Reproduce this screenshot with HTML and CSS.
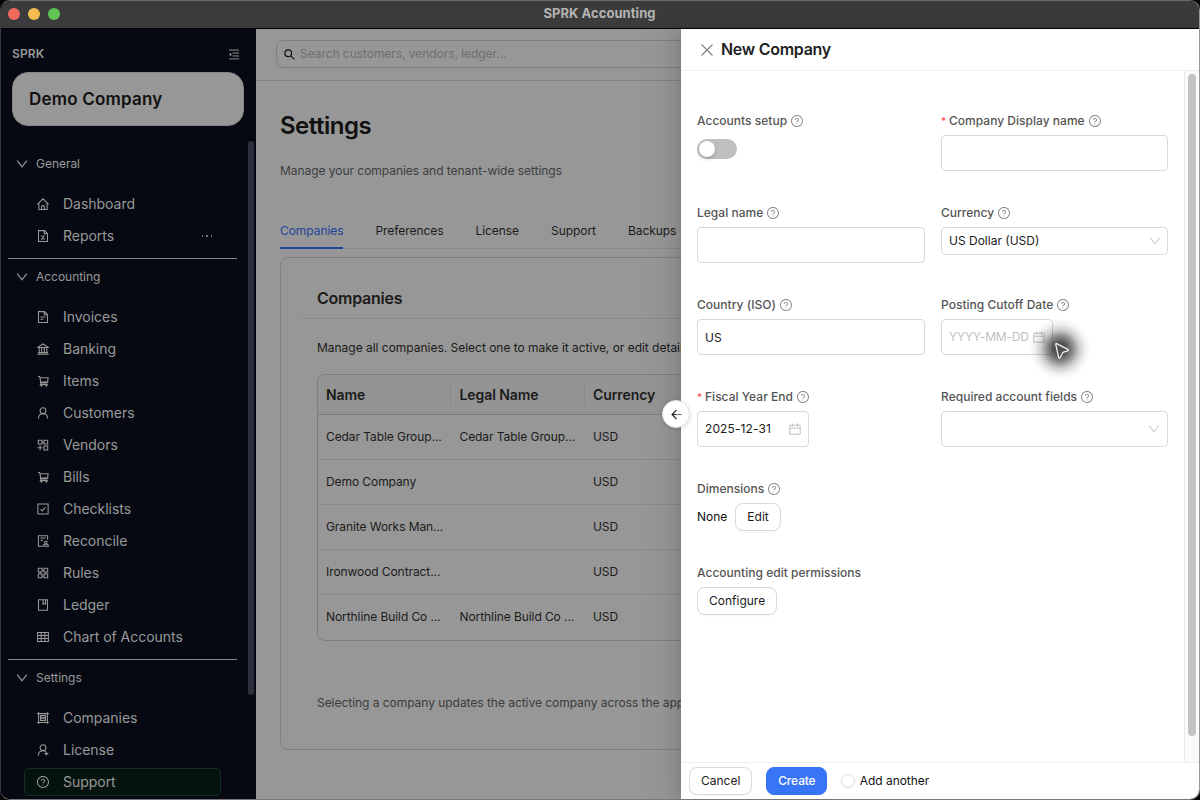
FILE: index.html
```html
<!DOCTYPE html>
<html lang="en">
<head>
<meta charset="utf-8">
<title>SPRK Accounting</title>
<link rel="stylesheet" href="styles.css">
</head>
<body>
<svg class="defs" aria-hidden="true">
  <symbol id="help" viewBox="64 64 896 896"><path class="solid" d="M512 64C264.6 64 64 264.6 64 512s200.6 448 448 448 448-200.6 448-448S759.4 64 512 64zm0 820c-205.4 0-372-166.6-372-372s166.6-372 372-372 372 166.6 372 372-166.6 372-372 372z"/><path class="solid" d="M623.6 316.7C593.6 290.4 554 276 512 276s-81.6 14.5-111.6 40.7C369.2 344 352 380.7 352 420v7.6c0 4.4 3.6 8 8 8h48c4.4 0 8-3.6 8-8V420c0-44.1 43.1-80 96-80s96 35.9 96 80c0 31.1-22 59.6-56.1 72.7-21.2 8.1-39.2 22.3-52.1 40.9-13.1 19-19.9 41.8-19.9 64.9V620c0 4.4 3.6 8 8 8h48c4.4 0 8-3.6 8-8v-22.7a48.3 48.3 0 0130.9-44.8c59-22.7 97.1-74.7 97.1-132.5.1-39.3-17.1-76-48.3-103.3zM472 732a40 40 0 1080 0 40 40 0 10-80 0z"/></symbol>
  <symbol id="chev" viewBox="0 0 12 12"><path d="M1.200 2.700 6 8.800l4.800-6.100"/></symbol>
  <symbol id="cal" viewBox="0 0 12 12"><path d="M.8 2.200h10.400v9H.8zM.8 5.200h10.400M3.500.6v3M8.500.6v3"/></symbol>
  <symbol id="home" viewBox="0 0 12 12"><path d="M.4 6.300 6 .8l5.600 5.500M1.900 5.200v6.200h8.200V5.200M4.700 11.400V7.700h2.600v3.700"/></symbol>
  <symbol id="excel" viewBox="0 0 12 12"><path d="M1.500.6h6L10.500 3.600v7.800h-9zM7.300.6v3.200h3.200M4.200 5.200l3.400 4.600M7.600 5.200 4.200 9.800"/></symbol>
  <symbol id="doc" viewBox="0 0 12 12"><path d="M1.500.6h6L10.500 3.600v7.800h-9zM7.300.6v3.200h3.200M3.500 6h5M3.500 8.200h3"/></symbol>
  <symbol id="bank" viewBox="0 0 12 12"><path d="M.8 4.400 6 1l5.200 3.400zM.4 11.100h11.200M1 9.500h10M2.200 4.600v5M4.700 4.600v5M7.300 4.600v5M9.800 4.600v5"/></symbol>
  <symbol id="cart" viewBox="0 0 12 12"><path d="M1 1.500h1.700L3.900 7.900h6.500M2.900 2.700h8.200l-.4 4.400H3.600M3.800 7.900l-.5 1.500h7.400"/><circle cx="4.400" cy="10.500" r=".6"/><circle cx="9.400" cy="10.500" r=".6"/></symbol>
  <symbol id="user" viewBox="0 0 12 12"><circle cx="6" cy="3.700" r="2.900"/><path d="M1.300 11.600C1.500 8.600 3.300 6.700 6 6.700s4.500 1.900 4.700 4.900"/></symbol>
  <symbol id="vendor" viewBox="0 0 12 12"><path d="M1.300 1.200H5V5H1.300zM7 1.200h3.700V5H7zM7 6.900h3.700v4H7zM3.100 6.200v5M.5 8.700h5M5 3.200h2"/></symbol>
  <symbol id="check" viewBox="0 0 12 12"><path d="M.9.9h10.200v10.200H.9zM3.600 6l1.700 1.900 3.100-3.700"/></symbol>
  <symbol id="recon" viewBox="0 0 12 12"><path d="M5.300 11.300H1.400V.7h9.200v4M3.400 3h5.200M3.400 5.200h2.600M6.300 11.200h5V10l-1.500-.8h-2L6.300 10z"/><circle cx="8.800" cy="7.600" r="1.300"/></symbol>
  <symbol id="rules" viewBox="0 0 12 12"><path d="M1.300 1.300H5V5H1.300zM7 1.300h3.700V5H7zM1.300 7H5v3.700H1.300zM7 7h3.700v3.700H7zM5 3.200h2M5 8.900h2M3.200 5v2M8.900 5v2"/></symbol>
  <symbol id="book" viewBox="0 0 12 12"><path d="M1.500.7h9v10.600h-9zM6 .8v4.500l1.300-1 1.300 1V.8"/></symbol>
  <symbol id="table" viewBox="0 0 12 12"><path d="M.6 1.500h10.800v9H.6zM.6 4.500h10.800M.6 7.500h10.800M4.200 1.500v9M7.800 1.500v9"/></symbol>
  <symbol id="group" viewBox="0 0 12 12"><path d="M1.600.2v11.600M10.400.2v11.600M.2 1.600h11.600M.2 10.400h11.600M3.500 3.500h5v5h-5zM3.500 5.200h5M3.500 6.800h5"/></symbol>
  <symbol id="license" viewBox="0 0 12 12"><circle cx="6" cy="3.700" r="2.900"/><path d="M1.300 11.600C1.500 8.600 3.300 6.700 6 6.700c1.100 0 2 .3 2.800.9M9.300 7.700v3.800M7.400 9.600h3.900"/></symbol>
  <symbol id="fold" viewBox="0 0 12 12"><path d="M.5 1.200h11M4.300 4.400h7.200M4.300 7.600h7.200M.5 10.800h11"/><path class="solid" d="M.4 6 3 4v4z"/></symbol>
</svg>
<div class="window">
  <header class="titlebar"><div class="lights"><i class="red"></i><i class="yellow"></i><i class="green"></i></div><b>SPRK Accounting</b></header>
  <div class="body">
    <aside class="sidebar">
      <div class="brand"><span>SPRK</span><svg><use href="#fold"/></svg></div>
      <div class="company">Demo Company</div>
      <nav class="nav">
        <section>
          <h4><svg><use href="#chev"/></svg>General</h4>
          <a><svg><use href="#home"/></svg>Dashboard</a>
          <a><svg><use href="#excel"/></svg>Reports<span class="more"><i></i><i></i><i></i></span></a>
        </section>
        <section>
          <h4><svg><use href="#chev"/></svg>Accounting</h4>
          <a><svg><use href="#doc"/></svg>Invoices</a>
          <a><svg><use href="#bank"/></svg>Banking</a>
          <a><svg><use href="#cart"/></svg>Items</a>
          <a><svg><use href="#user"/></svg>Customers</a>
          <a><svg><use href="#vendor"/></svg>Vendors</a>
          <a><svg><use href="#cart"/></svg>Bills</a>
          <a><svg><use href="#check"/></svg>Checklists</a>
          <a><svg><use href="#recon"/></svg>Reconcile</a>
          <a><svg><use href="#rules"/></svg>Rules</a>
          <a><svg><use href="#book"/></svg>Ledger</a>
          <a><svg><use href="#table"/></svg>Chart of Accounts</a>
        </section>
        <section>
          <h4><svg><use href="#chev"/></svg>Settings</h4>
          <a><svg><use href="#group"/></svg>Companies</a>
          <a><svg><use href="#license"/></svg>License</a>
          <a class="active"><svg><use href="#help"/></svg>Support</a>
        </section>
        <div class="nav-thumb"></div>
      </nav>
    </aside>
    <main class="main">
      <div class="topbar"><div class="search"><svg viewBox="0 0 12 12"><circle cx="4.600" cy="4.600" r="3.700"/><path d="m7.400 7.400 4 4"/></svg>Search customers, vendors, ledger...</div></div>
      <div class="page">
        <h1>Settings</h1>
        <p class="sub">Manage your companies and tenant-wide settings</p>
        <div class="tabs"><span class="on">Companies</span><span>Preferences</span><span>License</span><span>Support</span><span>Backups</span></div>
        <div class="card">
          <h2>Companies</h2>
          <div class="card-body">
            <p class="intro">Manage all companies. Select one to make it active, or edit details.</p>
            <div class="grid">
              <div class="row head"><span>Name</span><span>Legal Name</span><span>Currency</span></div>
              <div class="row"><span>Cedar Table Group...</span><span>Cedar Table Group...</span><span>USD</span></div>
              <div class="row"><span>Demo Company</span><span></span><span>USD</span></div>
              <div class="row"><span>Granite Works Man...</span><span></span><span>USD</span></div>
              <div class="row"><span>Ironwood Contract...</span><span></span><span>USD</span></div>
              <div class="row"><span>Northline Build Co ...</span><span>Northline Build Co ...</span><span>USD</span></div>
            </div>
            <p class="note">Selecting a company updates the active company across the app.</p>
          </div>
        </div>
      </div>
    </main>
    <aside class="drawer">
      <div class="drawer-head"><svg viewBox="0 0 12 12"><path d="m.5.5 11 11M11.500.5l-11 11"/></svg><h3>New Company</h3></div>
      <div class="drawer-body">
        <div class="form">
          <div class="field"><label>Accounts setup<svg><use href="#help"/></svg></label><div class="switch"><i></i></div></div>
          <div class="field"><label><em>*</em>Company Display name<svg><use href="#help"/></svg></label><div class="input"></div></div>
          <div class="field"><label>Legal name<svg><use href="#help"/></svg></label><div class="input"></div></div>
          <div class="field"><label>Currency<svg><use href="#help"/></svg></label><div class="input short">US Dollar (USD)<svg><use href="#chev"/></svg></div></div>
          <div class="field"><label>Country (ISO)<svg><use href="#help"/></svg></label><div class="input country">US</div></div>
          <div class="field"><label>Posting Cutoff Date<svg><use href="#help"/></svg></label><div class="input date empty">YYYY-MM-DD<svg><use href="#cal"/></svg></div></div>
          <div class="field"><label><em>*</em>Fiscal Year End<svg><use href="#help"/></svg></label><div class="input date">2025-12-31<svg><use href="#cal"/></svg></div></div>
          <div class="field"><label>Required account fields<svg><use href="#help"/></svg></label><div class="input"><svg><use href="#chev"/></svg></div></div>
          <div class="field wide"><label>Dimensions<svg><use href="#help"/></svg></label><div class="inline">None<button>Edit</button></div></div>
          <div class="field wide"><label>Accounting edit permissions</label><div class="inline"><button>Configure</button></div></div>
        </div>
        <div class="track"><div class="thumb"></div></div>
      </div>
      <div class="drawer-foot"><button class="cancel">Cancel</button><button class="primary">Create</button><span class="radio"></span>Add another</div>
      <div class="handle"><svg viewBox="0 0 12 12"><path d="M6 1 1.200 6 6 11M1.500 6H6"/><path class="faint" d="M6 6h5.500"/></svg></div>
    </aside>
  </div>
</div>
<div class="pointer"><svg viewBox="0 0 16 18"><path d="M1.800 2.500Q1.400 1.200 2.700 1.700L13.800 7.300Q15 8.100 13.600 8.800L9 10.300 6.200 15.500Q5.300 16.900 4.600 15.300Z"/></svg></div>
</body>
</html>
```
FILE: styles.css
```css
* { box-sizing: border-box; }
body { margin: 0; width: 1200px; height: 800px; overflow: hidden; background: #050505; font: 12px/20px Inter, "Liberation Sans", sans-serif; color: #111; }
h1, h2, h3, h4, p { margin: 0; }
svg { fill: none; stroke: currentColor; stroke-width: 1; flex: none; overflow: visible; }
.solid { fill: currentColor; stroke: none; }
.defs { position: absolute; width: 0; height: 0; }
.window { width: 1200px; height: 800px; border: 1px solid #555; border-color: #6c6c6c #999 #777 #383b42; border-radius: 10px; overflow: hidden; display: flex; flex-direction: column; background: #060911; }
.titlebar { height: 28px; flex: none; background: #3b3b3b; border-bottom: 1px solid #000; display: grid; grid-template-columns: 1fr auto 1fr; align-items: center; color: #b4b4b4; font-size: 13px; line-height: 24px; padding-bottom: 1px; }
.titlebar b { font-weight: 700; letter-spacing: .05px; padding: 0 1px 2px 0; }
.lights { display: flex; gap: 8px; padding-left: 7px; }
.lights i { width: 12px; height: 12px; border-radius: 50%; }
.red { background: #ee6a5f; }
.yellow { background: #f5bd4f; }
.green { background: #61c454; }
.body { flex: 1; display: flex; min-height: 0; }

.sidebar { width: 255px; flex: none; background: #060911; color: #999; display: flex; flex-direction: column; }
.brand { display: flex; justify-content: space-between; align-items: center; height: 43px; padding: 7px 16px 0 11px; font-weight: 600; letter-spacing: .1px; }
.brand svg { width: 12px; height: 11px; }
.company { height: 54px; flex: none; margin: 0 12px 0 11px; border-radius: 16px; background: #979797; border: 1px solid #858585; color: #111; font-size: 17px; font-weight: 600; line-height: 52px; padding-left: 16px; letter-spacing: .2px; }
.nav { position: relative; flex: 1; margin-top: 15px; padding: 5px 19px 0 7px; min-height: 0; }
.nav section { padding-bottom: 6px; }
.nav section + section { border-top: 1px solid #858585; }
.nav h4 { height: 35px; margin-bottom: 7px; display: flex; align-items: center; gap: 8px; padding-left: 8px; font-weight: 400; font-size: 12px; letter-spacing: -.03px; }
.nav h4 svg { width: 12px; height: 12px; stroke-width: 1.200; }
.nav a { height: 32px; display: flex; align-items: center; gap: 14px; padding-left: 29px; font-size: 14px; letter-spacing: -.03px; }
.nav a svg { width: 12px; height: 12px; stroke-width: 1.050; }
.nav .active { height: 28px; margin: 2px 16px 0; padding-left: 12px; background: #05130f; border: 1px solid #123026; border-radius: 5px; }
.more { margin-left: auto; padding-right: 25px; display: flex; gap: 3px; }
.more i { width: 1.500px; height: 1.500px; background: #777; }
.nav-thumb { position: absolute; top: 0; right: 2px; width: 6px; height: 554px; border-radius: 3px; background: #2a303c; }

.main { flex: 1; min-width: 0; overflow: hidden; background: #979797; color: #1b1b1b; }
.topbar { height: 52px; border-bottom: 1px solid #828282; padding: 11px 0 0 20px; }
.search { width: 600px; height: 28px; border: 1px solid #808080; border-radius: 8px; display: flex; align-items: center; gap: 5px; padding-left: 7px; color: #6f6f6f; letter-spacing: -.05px; }
.search svg { width: 11px; height: 11px; color: #111; stroke-width: 1.200; }
.page { padding-left: 24px; width: 900px; }
h1 { margin-top: 29px; font-size: 24px; line-height: 32px; font-weight: 600; color: #101010; letter-spacing: -.5px; }
.sub { margin-top: 19px; color: #3e3e3e; letter-spacing: -.04px; }
.tabs { height: 39px; margin-top: 29px; display: flex; gap: 32px; border-bottom: 1px solid #8b8b8b; letter-spacing: -.06px; }
.tabs span { height: 39px; line-height: 42px; }
.tabs .on { color: #1d459b; border-bottom: 2px solid #1d459b; }
.card { margin-top: 8px; height: 493px; border: 1px solid #808080; border-radius: 8px; padding-left: 20px; }
h2 { height: 61px; font-size: 16px; font-weight: 600; line-height: 80px; padding-left: 16px; border-bottom: 1px solid #8a8a8a; letter-spacing: -.25px; }
.card-body { padding-left: 16px; }
.intro { margin-top: 19px; letter-spacing: -.02px; }
.grid { margin-top: 16px; border: 1px solid #7e7e7e; border-radius: 8px; }
.row { height: 45px; display: grid; grid-template-columns: 133.500px 133.500px 200px; border-bottom: 1px solid #8a8a8a; align-items: center; letter-spacing: -.08px; }
.row:last-child { border-bottom-color: transparent; }
.row span { padding-left: 8px; height: 22px; line-height: 22px; white-space: nowrap; }
.head { height: 40px; background: #949494; border-radius: 7px 7px 0 0; border-color: #7e7e7e; font-size: 14px; font-weight: 600; }
.row.head span + span { border-left: 1px solid #8a8a8a; margin-left: -1.500px; padding-left: 8.500px; }
.note { margin-top: 52px; color: #3b3b3b; letter-spacing: -.04px; }

.drawer { width: 518px; flex: none; position: relative; background: #fff; display: flex; flex-direction: column; box-shadow: -6px 0 16px rgba(0,0,0,.08), -3px 0 6px -4px rgba(0,0,0,.12), -9px 0 28px 8px rgba(0,0,0,.05); }
.drawer-head { height: 42px; flex: none; border-bottom: 1px solid #f0f0f0; display: flex; align-items: center; gap: 8px; padding-left: 20px; }
.drawer-head svg { width: 12px; height: 12px; color: #808080; stroke-width: 1.100; }
h3 { padding-bottom: 2px; font-size: 16px; font-weight: 600; color: #1f1f1f; letter-spacing: -.28px; }
.drawer-body { flex: 1; display: flex; min-height: 0; }
.form { flex: 1; display: grid; grid-template-columns: 228px 227px; column-gap: 16px; row-gap: 28px; align-content: start; padding: 36px 0 0 16px; }
.wide { grid-column: 1 / 3; }
.field label { height: 28px; display: flex; align-items: center; color: #555; font-weight: 500; white-space: nowrap; letter-spacing: .02px; }
.field label svg { width: 12px; height: 12px; margin-left: 4px; color: #8a8a8a; }
.field em { color: #ff4d4f; font-style: normal; font-size: 10px; width: 8px; }
.input { height: 36px; border: 1px solid #d9d9d9; border-radius: 4px; display: flex; align-items: center; padding: 0 7px; color: #1b1b1b; }
.input svg { width: 12px; height: 12px; margin-left: auto; color: #bfbfbf; }
.short { height: 28px; padding-right: 6px; }
.country { padding-top: 2px; }
.date { width: 112px; padding-bottom: 1px; letter-spacing: .1px; }
.empty { color: #bfbfbf; letter-spacing: -.2px; }
.switch { width: 40px; height: 20px; margin-top: 4px; padding: 2px; border-radius: 10px; background: #bfbfbf; }
.switch i { display: block; width: 16px; height: 16px; border-radius: 50%; background: #fff; box-shadow: 0 2px 4px rgba(0,35,11,.2); }
.inline { display: flex; align-items: center; gap: 8px; }
button { height: 28px; padding: 0 11px; border: 1px solid #d9d9d9; border-radius: 8px; background: #fff; color: #1b1b1b; font: inherit; box-shadow: 0 2px 0 rgba(0,0,0,.02); }
.track { width: 15px; background: #fafafa; border-left: 1px solid #e8e8e8; padding: 3px 3px 0; }
.thumb { height: 662px; width: 8px; border-radius: 4px; background: #c2c2c2; }
.drawer-foot { height: 37px; flex: none; border-top: 1px solid #f0f0f0; display: flex; align-items: center; padding: 0 0 1px 8px; letter-spacing: -.06px; }
.primary { width: 61px; padding: 0; margin: 0 14px; background: #3875f6; border-color: #3875f6; color: #fff; font-weight: 500; letter-spacing: -.15px; }
.radio { width: 14px; height: 14px; border: 1px solid #d9d9d9; border-radius: 50%; margin-right: 4.500px; }
.handle { position: absolute; left: -19px; top: 371px; width: 28px; height: 28px; border-radius: 50%; background: #fff; border: 1px solid #e4e4e4; box-shadow: 0 1px 4px rgba(0,0,0,.15); display: grid; place-items: center; }
.handle svg { width: 11px; height: 11px; color: #222; stroke-width: 1.300; }
.faint { stroke: #777; }
.pointer { position: absolute; left: 1029px; top: 318px; width: 62px; height: 62px; border-radius: 50%; background: radial-gradient(circle, rgba(0,0,0,.74) 0, rgba(0,0,0,.68) 14%, rgba(0,0,0,.44) 30%, rgba(0,0,0,.19) 44%, rgba(0,0,0,.06) 57%, rgba(0,0,0,0) 70%); }
.pointer svg { position: absolute; left: 25px; top: 24px; width: 16px; height: 18px; color: #eee; fill: #505050; stroke-width: 1.300; }
```
